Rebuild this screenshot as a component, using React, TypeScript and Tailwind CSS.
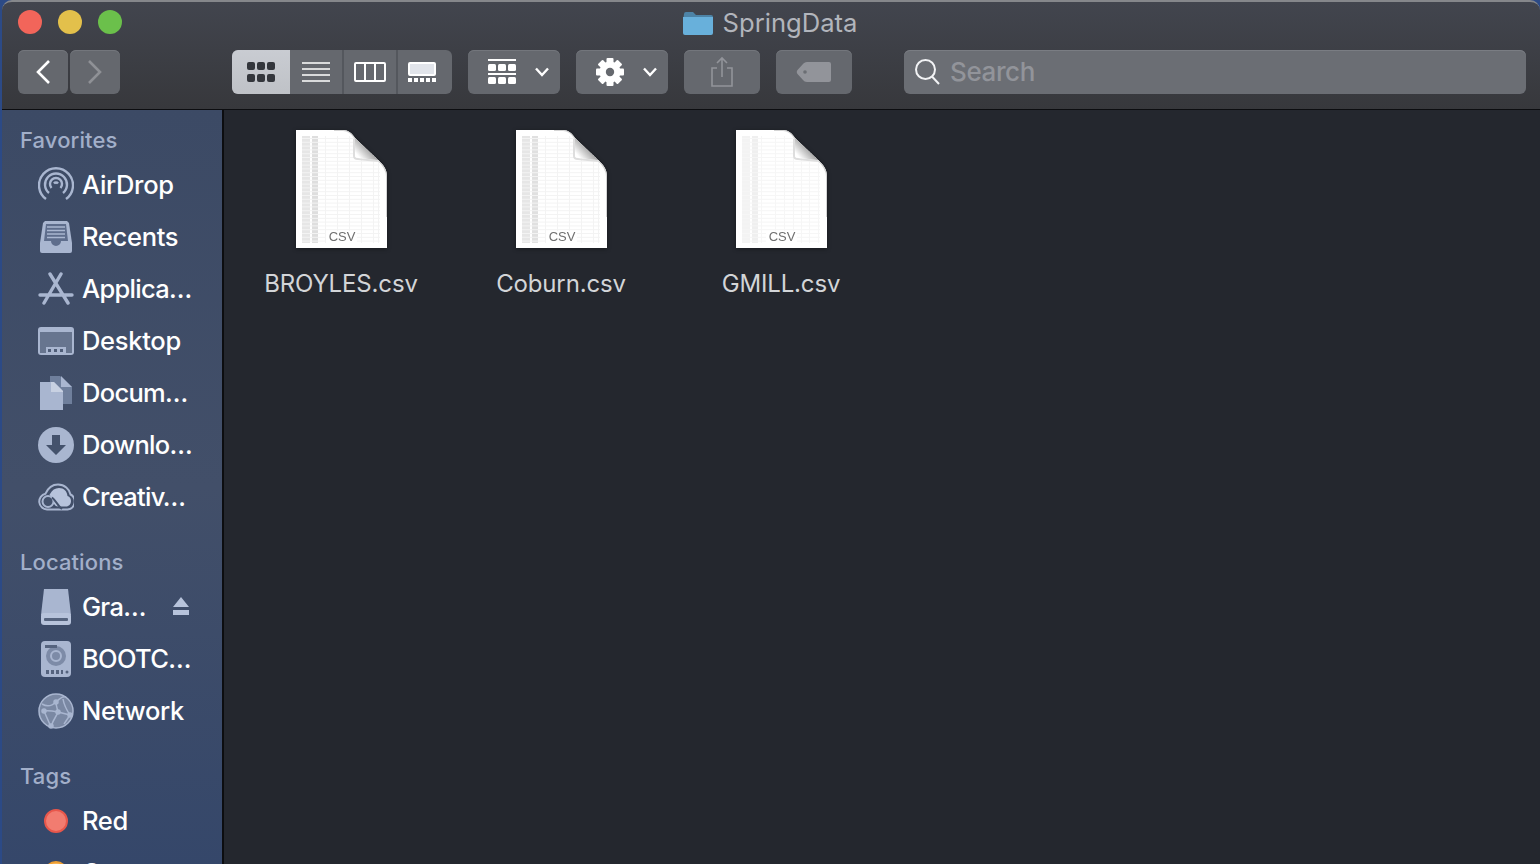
import type { ReactNode } from 'react'

const FONT = 'font-[Inter,"Noto_Sans",sans-serif]'

function Btn({ className, children }: { className: string; children: ReactNode }) {
  return (
    <div className={`h-[44px] flex items-center rounded-[6px] bg-[#65686e] shadow-[inset_0_1px_0_#73767c] ${className}`}>
      {children}
    </div>
  )
}

function Chevron() {
  return (
    <svg width="16" height="10" viewBox="0 0 16 10" fill="none" stroke="#fff" strokeWidth="2.4">
      <path d="M2 1.500 8 8l6-6.500" />
    </svg>
  )
}

function GridIcon({ color }: { color: string }) {
  const cells = [0, 10, 20]
  return (
    <svg width="28" height="20" viewBox="0 0 28 20" fill={color}>
      {cells.map(x => (
        <g key={x}>
          <rect x={x} y="0" width="8" height="8" rx="2" />
          <rect x={x} y="12" width="8" height="8" rx="2" />
        </g>
      ))}
    </svg>
  )
}

function Gear() {
  const teeth = [0, 45, 90, 135, 180, 225, 270, 315]
  return (
    <svg width="28" height="28" viewBox="0 0 28 28">
      <circle cx="14" cy="14" r="10.500" fill="#fff" />
      {teeth.map(a => (
        <rect key={a} x="10.500" y="0" width="7" height="6" rx="1" fill="#fff" transform={`rotate(${a} 14 14)`} />
      ))}
      <circle cx="14" cy="14" r="4.200" fill="#65686e" />
    </svg>
  )
}

function Toolbar() {
  return (
    <div className="flex items-center pl-[16px] pr-[14px] mt-[6px]">
      <Btn className="w-[50px] justify-center">
        <svg width="16" height="26" viewBox="0 0 16 26" fill="none" stroke="#fff" strokeWidth="2.6">
          <path d="M14 2 3 13l11 11" />
        </svg>
      </Btn>
      <Btn className="w-[50px] ml-[2px] justify-center">
        <svg width="16" height="26" viewBox="0 0 16 26" fill="none" stroke="#8f9196" strokeWidth="2.6">
          <path d="M2 2l11 11L2 24" />
        </svg>
      </Btn>

      <div className="ml-[112px] w-[220px] h-[44px] flex rounded-[6px] overflow-hidden bg-[#65686e]">
        <div className="w-[58px] flex items-center justify-center bg-gradient-to-b from-[#c9ccd2] to-[#bfc2c7]">
          <GridIcon color="#33363c" />
        </div>
        <div className="w-[52px] flex items-center justify-center">
          <svg width="28" height="20" viewBox="0 0 28 20" stroke="#fff" strokeWidth="1.6">
            <path d="M0 1h28M0 7h28M0 13h28M0 19h28" />
          </svg>
        </div>
        <div className="w-[2px] bg-[#54575d]" />
        <div className="w-[52px] flex items-center justify-center">
          <svg width="32" height="20" viewBox="0 0 32 20" fill="none" stroke="#fff" strokeWidth="2">
            <rect x="1" y="1" width="30" height="18" rx="1" />
            <path d="M11 1v18M21 1v18" />
          </svg>
        </div>
        <div className="w-[2px] bg-[#54575d]" />
        <div className="flex-1 flex items-center justify-center pr-[6px]">
          <svg width="28" height="20" viewBox="0 0 28 20" fill="#fff">
            <rect x="1" y="1" width="26" height="12" rx="1" fill="#e1e4ea" stroke="#fff" strokeWidth="2" />
            <path d="M0 16h4v4H0zM6 16h4v4H6zM12 16h4v4h-4zM18 16h4v4h-4zM24 16h4v4h-4z" />
          </svg>
        </div>
      </div>

      <Btn className="ml-[16px] w-[92px] gap-[17px] pl-[19px]">
        <svg width="30" height="26" viewBox="0 0 30 26" fill="#fff">
          <path d="M1 0h28v2H1z" />
          <rect x="1" y="5" width="8" height="7" rx="1.500" />
          <rect x="11" y="5" width="8" height="7" rx="1.500" />
          <rect x="21" y="5" width="8" height="7" rx="1.500" />
          <path d="M1 14h28v2H1z" />
          <rect x="1" y="18" width="8" height="7" rx="1.500" />
          <rect x="11" y="18" width="8" height="7" rx="1.500" />
          <rect x="21" y="18" width="8" height="7" rx="1.500" />
        </svg>
        <Chevron />
      </Btn>

      <Btn className="ml-[16px] w-[92px] gap-[18px] pl-[20px]">
        <Gear />
        <Chevron />
      </Btn>

      <Btn className="ml-[16px] w-[76px] justify-center bg-[#6b6e74]">
        <svg width="24" height="32" viewBox="0 0 24 32" fill="none" stroke="#92949a" strokeWidth="1.6">
          <path d="M7 12H2v18h20V12h-5M12 21V2M7 7l5-5 5 5" />
        </svg>
      </Btn>

      <Btn className="ml-[16px] w-[76px] justify-center bg-[#6b6e74]">
        <svg width="36" height="22" viewBox="0 0 36 22">
          <path fill="#92949a" d="M11 1h22a2 2 0 0 1 2 2v16a2 2 0 0 1-2 2H11c-2 0-3-1-4-2l-5.500-6c-1-1-1-3 0-4L7 3c1-1 2-2 4-2z" />
          <circle cx="9" cy="11" r="1.800" fill="#6b6e74" />
        </svg>
      </Btn>

      <div className="ml-[52px] flex-1 h-[44px] flex items-center rounded-[6px] bg-[#6b6e74] shadow-[inset_0_1px_0_#7a7d83] pl-[10px]">
        <svg width="26" height="28" viewBox="0 0 26 28" fill="none" stroke="#f2f3f5" strokeWidth="2">
          <circle cx="11.500" cy="11.500" r="9.500" />
          <path d="m18 18.500 7 7.500" />
        </svg>
        <span className="ml-[10px] text-[26px] tracking-[-0.4px] leading-none text-[#92949a] font-medium">Search</span>
      </div>
    </div>
  )
}

function TitleBar() {
  return (
    <div className="h-[109px] shrink-0 bg-gradient-to-b from-[#42454e] to-[#37383c] border-t-[2px] border-[#85878b] rounded-t-[10px]">
      <div className="relative flex items-center justify-center h-[42px] pr-[2px]">
        <div className="absolute left-[16px] top-[8px] flex gap-[16px]">
          <div className="w-[24px] h-[24px] rounded-full bg-[#f2655a]" />
          <div className="w-[24px] h-[24px] rounded-full bg-[#e3c04b]" />
          <div className="w-[24px] h-[24px] rounded-full bg-[#6bc04b]" />
        </div>
        <svg width="30" height="24" viewBox="0 0 30 24" className="mr-[10px]">
          <path fill="#4d83a6" d="M1 3a2 2 0 0 1 2-2h7l3 3h15a2 2 0 0 1 2 2v4H0z" />
          <path fill="#68b0db" d="M0 6h30v16a2 2 0 0 1-2 2H2a2 2 0 0 1-2-2z" />
        </svg>
        <span className="text-[25.6px] leading-none text-[#b2b5bc]">SpringData</span>
      </div>
      <Toolbar />
    </div>
  )
}

const ICON = '#a9b6d0'

const icons: Record<string, ReactNode> = {
  airdrop: (
    <svg width="36" height="36" viewBox="0 0 36 36" fill="none" stroke={ICON} strokeWidth="2.400">
      <path d="M8 32a17 17 0 1 1 20 0" />
      <path d="M11 26a11 11 0 1 1 14 0" />
      <path d="M13.500 21a6 6 0 1 1 9 0" />
      <path d="M16 16.500a2.500 2.500 0 0 1 4 0" />
    </svg>
  ),
  recents: (
    <svg width="32" height="32" viewBox="0 0 32 32">
      <path fill={ICON} d="M5 0h22l2 2 3 20v8a2 2 0 0 1-2 2H2a2 2 0 0 1-2-2v-8L3 2z" />
      <path fill="#5e6d8c" d="M6 3h20l2 17h-7a5 5 0 0 1-10 0H4z" />
      <path stroke={ICON} strokeWidth="1.500" d="M7 6h18M7 9.500h18M7 13h18M7 16.500h18" />
    </svg>
  ),
  apps: (
    <svg width="36" height="34" viewBox="0 0 36 34" fill="none" stroke={ICON} strokeWidth="3.400" strokeLinecap="round">
      <path d="M12 2l18 29M23 2 6 31M2 23h32" />
    </svg>
  ),
  desktop: (
    <svg width="36" height="28" viewBox="0 0 36 28">
      <rect x="0" y="0" width="36" height="28" rx="3" fill={ICON} />
      <rect x="2" y="5" width="32" height="21" fill="#67758f" />
      <path fill={ICON} d="M8 20h20v6H8z" />
      <path fill="#4f5d78" d="M10 22h3v3h-3zM16 22h3v3h-3zM22 22h3v3h-3z" />
    </svg>
  ),
  docs: (
    <svg width="32" height="34" viewBox="0 0 32 34">
      <path fill="#6f7f9c" d="M10 0h10l12 11v17H10z" />
      <path fill={ICON} d="M21 0l11 11H21z" />
      <path fill={ICON} d="M0 6h14l9 9v19H0z" />
      <path fill="#dde3ee" d="M11 6h3l9 9v1H11z" opacity=".6" />
    </svg>
  ),
  download: (
    <svg width="36" height="36" viewBox="0 0 36 36">
      <circle cx="18" cy="18" r="18" fill={ICON} />
      <path fill="#44526c" d="M14 8h8v10h6L18 28 8 18h6z" />
    </svg>
  ),
  cloud: (
    <svg width="36" height="28" viewBox="0 0 36 28" fill="none">
      <path
        d="M9 26.500a8 8 0 0 1-1.500-15.800C10 5 15 1.500 20 1.500c6.500 0 11.500 4.500 12.500 10a8 8 0 0 1-3 15z"
        stroke={ICON}
        strokeWidth="2"
      />
      <path fill="#b7c3db" d="M12 11c2-4 5-6 9-6 5 0 8 3 8.500 8 2.500.5 3.500 3 3.500 5 0 3-2 5.500-5 5.500h-8c-3 0-5-3-8.500-12.500z" />
      <circle cx="10" cy="18.500" r="5.500" fill="#44526c" stroke={ICON} strokeWidth="2" />
      <path d="M14 14.500c4 3 6 9 10 11.500" stroke="#44526c" strokeWidth="2" />
    </svg>
  ),
  drive: (
    <svg width="32" height="36" viewBox="0 0 32 36">
      <path fill={ICON} d="M4 0h24l3 26H1z" />
      <rect x="1" y="24" width="30" height="12" rx="3" fill="#b7c3db" />
      <rect x="4" y="29" width="24" height="3" rx="1" fill="#55637e" />
    </svg>
  ),
  hdd: (
    <svg width="32" height="36" viewBox="0 0 32 36">
      <rect x="1" y="0" width="30" height="36" rx="4" fill={ICON} />
      <circle cx="16" cy="15" r="10" fill="#7d8ba7" />
      <circle cx="16" cy="15" r="5" fill="none" stroke={ICON} strokeWidth="2" />
      <path fill="#55637e" d="M5 4h12v3H5zM6 29h3v4H6zM11 29h3v4h-3zM16 29h3v4h-3zM21 29h2v4h-2z" />
      <circle cx="27" cy="31" r="1.500" fill="#55637e" />
    </svg>
  ),
  network: (
    <svg width="36" height="36" viewBox="0 0 36 36" fill="none" stroke={ICON} strokeWidth="1.500">
      <circle cx="18" cy="18" r="17" fill="#7a88a3" />
      <path d="M4 11c5 3 9 3 14-2s8-6 10-5M18 9c0 5 2 8 2 10s-5 7-7 15M20 19l12 3M20 19c-5-1-10-2-14-1M25 6c1 6 3 10 7 16M13 34l-7-16M32 22l-6 9" />
      <g fill={ICON}>
        <circle cx="18" cy="9" r="2" />
        <circle cx="20" cy="19" r="2" />
        <circle cx="32" cy="22" r="2" />
        <circle cx="6" cy="18" r="2" />
        <circle cx="13" cy="33" r="2" />
      </g>
    </svg>
  ),
  red: (
    <svg width="24" height="24" viewBox="0 0 24 24">
      <circle cx="12" cy="12" r="11" fill="#f27c70" stroke="#e8574b" strokeWidth="2" />
    </svg>
  ),
  orange: (
    <svg width="24" height="24" viewBox="0 0 24 24">
      <circle cx="12" cy="12" r="11" fill="#f7b55a" stroke="#ef9f32" strokeWidth="2" />
    </svg>
  ),
}

function SideHeader({ label, className }: { label: string; className: string }) {
  return <div className={`pl-[18px] text-[22px] tracking-[0.1px] leading-[28px] font-medium text-[#a2afc9] ${className}`}>{label}</div>
}

function SideItem({ icon, label, eject, cut }: { icon: string; label: string; eject?: boolean; cut?: boolean }) {
  return (
    <div className="h-[52px] flex items-center">
      <div className="w-[80px] pl-[34px] shrink-0">
        <div className="w-[40px] flex justify-center">{icons[icon]}</div>
      </div>
      <span className={`text-[25.5px] font-medium leading-none text-white whitespace-nowrap ${cut ? 'tracking-[-0.7px]' : 'tracking-[-0.3px]'}`}>{label}</span>
      {eject && (
        <svg width="18" height="20" viewBox="0 0 18 20" fill="#b7c3db" className="ml-auto mr-[32px]">
          <path d="M9 0l8 10H1zM1 13h16v5H1z" />
        </svg>
      )}
    </div>
  )
}

function Sidebar() {
  return (
    <div className="w-[222px] shrink-0 bg-gradient-to-b from-[#3c4a65] via-[#424f69] to-[#35476a] border-r-[2px] border-[#0c0d10] overflow-hidden">
      <SideHeader label="Favorites" className="mt-[16px]" />
      <div className="mt-[5px]">
        <SideItem icon="airdrop" label="AirDrop" />
        <SideItem icon="recents" label="Recents" />
        <SideItem icon="apps" label="Applica…" cut />
        <SideItem icon="desktop" label="Desktop" />
        <SideItem icon="docs" label="Docum…" cut />
        <SideItem icon="download" label="Downlo…" cut />
        <SideItem icon="cloud" label="Creativ…" cut />
      </div>
      <SideHeader label="Locations" className="mt-[25px]" />
      <div className="mt-[5px]">
        <SideItem icon="drive" label="Gra…" eject cut />
        <SideItem icon="hdd" label="BOOTC…" cut />
        <SideItem icon="network" label="Network" />
      </div>
      <SideHeader label="Tags" className="mt-[25px]" />
      <div className="mt-[5px]">
        <SideItem icon="red" label="Red" />
        <SideItem icon="orange" label="Orange" />
      </div>
    </div>
  )
}

const PAGE = 'M0 0h47c5 0 9 3 12 8l23 22c6 5 9 10 9 17v71H0z'
const FOLD = 'M59 8v17c0 2 1 3 3 3l20 2z'

function CsvIcon({ id, cellA, cellB, line, cols }: { id: string; cellA: string; cellB: string; line: string; cols: number[] }) {
  const rows = Array.from({ length: 28 }, (_, i) => 8 + i * 3.800)
  return (
    <svg width="91" height="118" viewBox="0 0 91 118" className="drop-shadow-[0_1px_2px_rgba(0,0,0,0.4)]">
      <defs>
        <clipPath id={`${id}-page`}>
          <path d={PAGE} />
        </clipPath>
        <linearGradient id={`${id}-fold`} gradientUnits="userSpaceOnUse" x1="60" y1="28" x2="71" y2="18">
          <stop offset="0.200" stopColor="#ffffff" />
          <stop offset="1" stopColor="#a8a8a8" />
        </linearGradient>
      </defs>
      <path fill="#fff" d={PAGE} />
      <g clipPath={`url(#${id}-page)`}>
        <rect x="6" y="6" width="8" height="107" fill={cellA} />
        <rect x="16" y="6" width="6" height="107" fill={cellB} />
        {rows.map(y => (
          <rect key={y} x="6" y={y} width="78" height="1" fill={line} />
        ))}
        {cols.map(x => (
          <rect key={x} x={x} y="6" width="1" height="107" fill={line} />
        ))}
        <path d="M38 0h9c5 0 9 3 12 8l23 22c6 5 9 10 9 17v40" fill="none" stroke="#d4d4d4" strokeWidth="2" />
        <path d="M58 9v17c0 2 2 3 4 3l20 2" fill="none" stroke="#dedede" strokeWidth="2" />
      </g>
      <path fill={`url(#${id}-fold)`} d={FOLD} />
      <path fill="#fff" d="M30 101h31v12H30z" />
      <text x="46" y="111" textAnchor="middle" fontSize="13" fill="#6f6f6f" fontFamily="Liberation Sans, sans-serif">CSV</text>
    </svg>
  )
}

const files = [
  { name: 'BROYLES.csv', cellA: '#e6e6e6', cellB: '#dedede', line: '#f3f3f3', cols: [29, 41, 53, 65, 77, 82] },
  { name: 'Coburn.csv', cellA: '#e6e6e6', cellB: '#e0e0e0', line: '#f3f3f3', cols: [29, 41, 53, 65, 77, 82] },
  { name: 'GMILL.csv', cellA: '#f3f3f3', cellB: '#efefef', line: '#f6f6f6', cols: [25, 39, 48, 57, 65, 73, 82] },
]

export default function App() {
  return (
    <div className={`w-[1540px] h-[864px] overflow-hidden bg-[#2c4a86] pl-[2px] flex flex-col ${FONT}`}>
      <TitleBar />
      <div className="h-[1px] shrink-0 bg-[#0c0d10]" />
      <div className="flex flex-1 min-h-0">
        <Sidebar />
        <div className="flex-1 bg-[#24272e] pl-[7px] pt-[20px] flex items-start">
          {files.map(f => (
            <div key={f.name} className="w-[220px] flex flex-col items-center">
              <CsvIcon id={f.name.split('.')[0]} cellA={f.cellA} cellB={f.cellB} line={f.line} cols={f.cols} />
              <span className="mt-[22px] text-[24px] tracking-[-0.15px] leading-[28px] text-[#d3d5d8]">{f.name}</span>
            </div>
          ))}
        </div>
      </div>
    </div>
  )
}
